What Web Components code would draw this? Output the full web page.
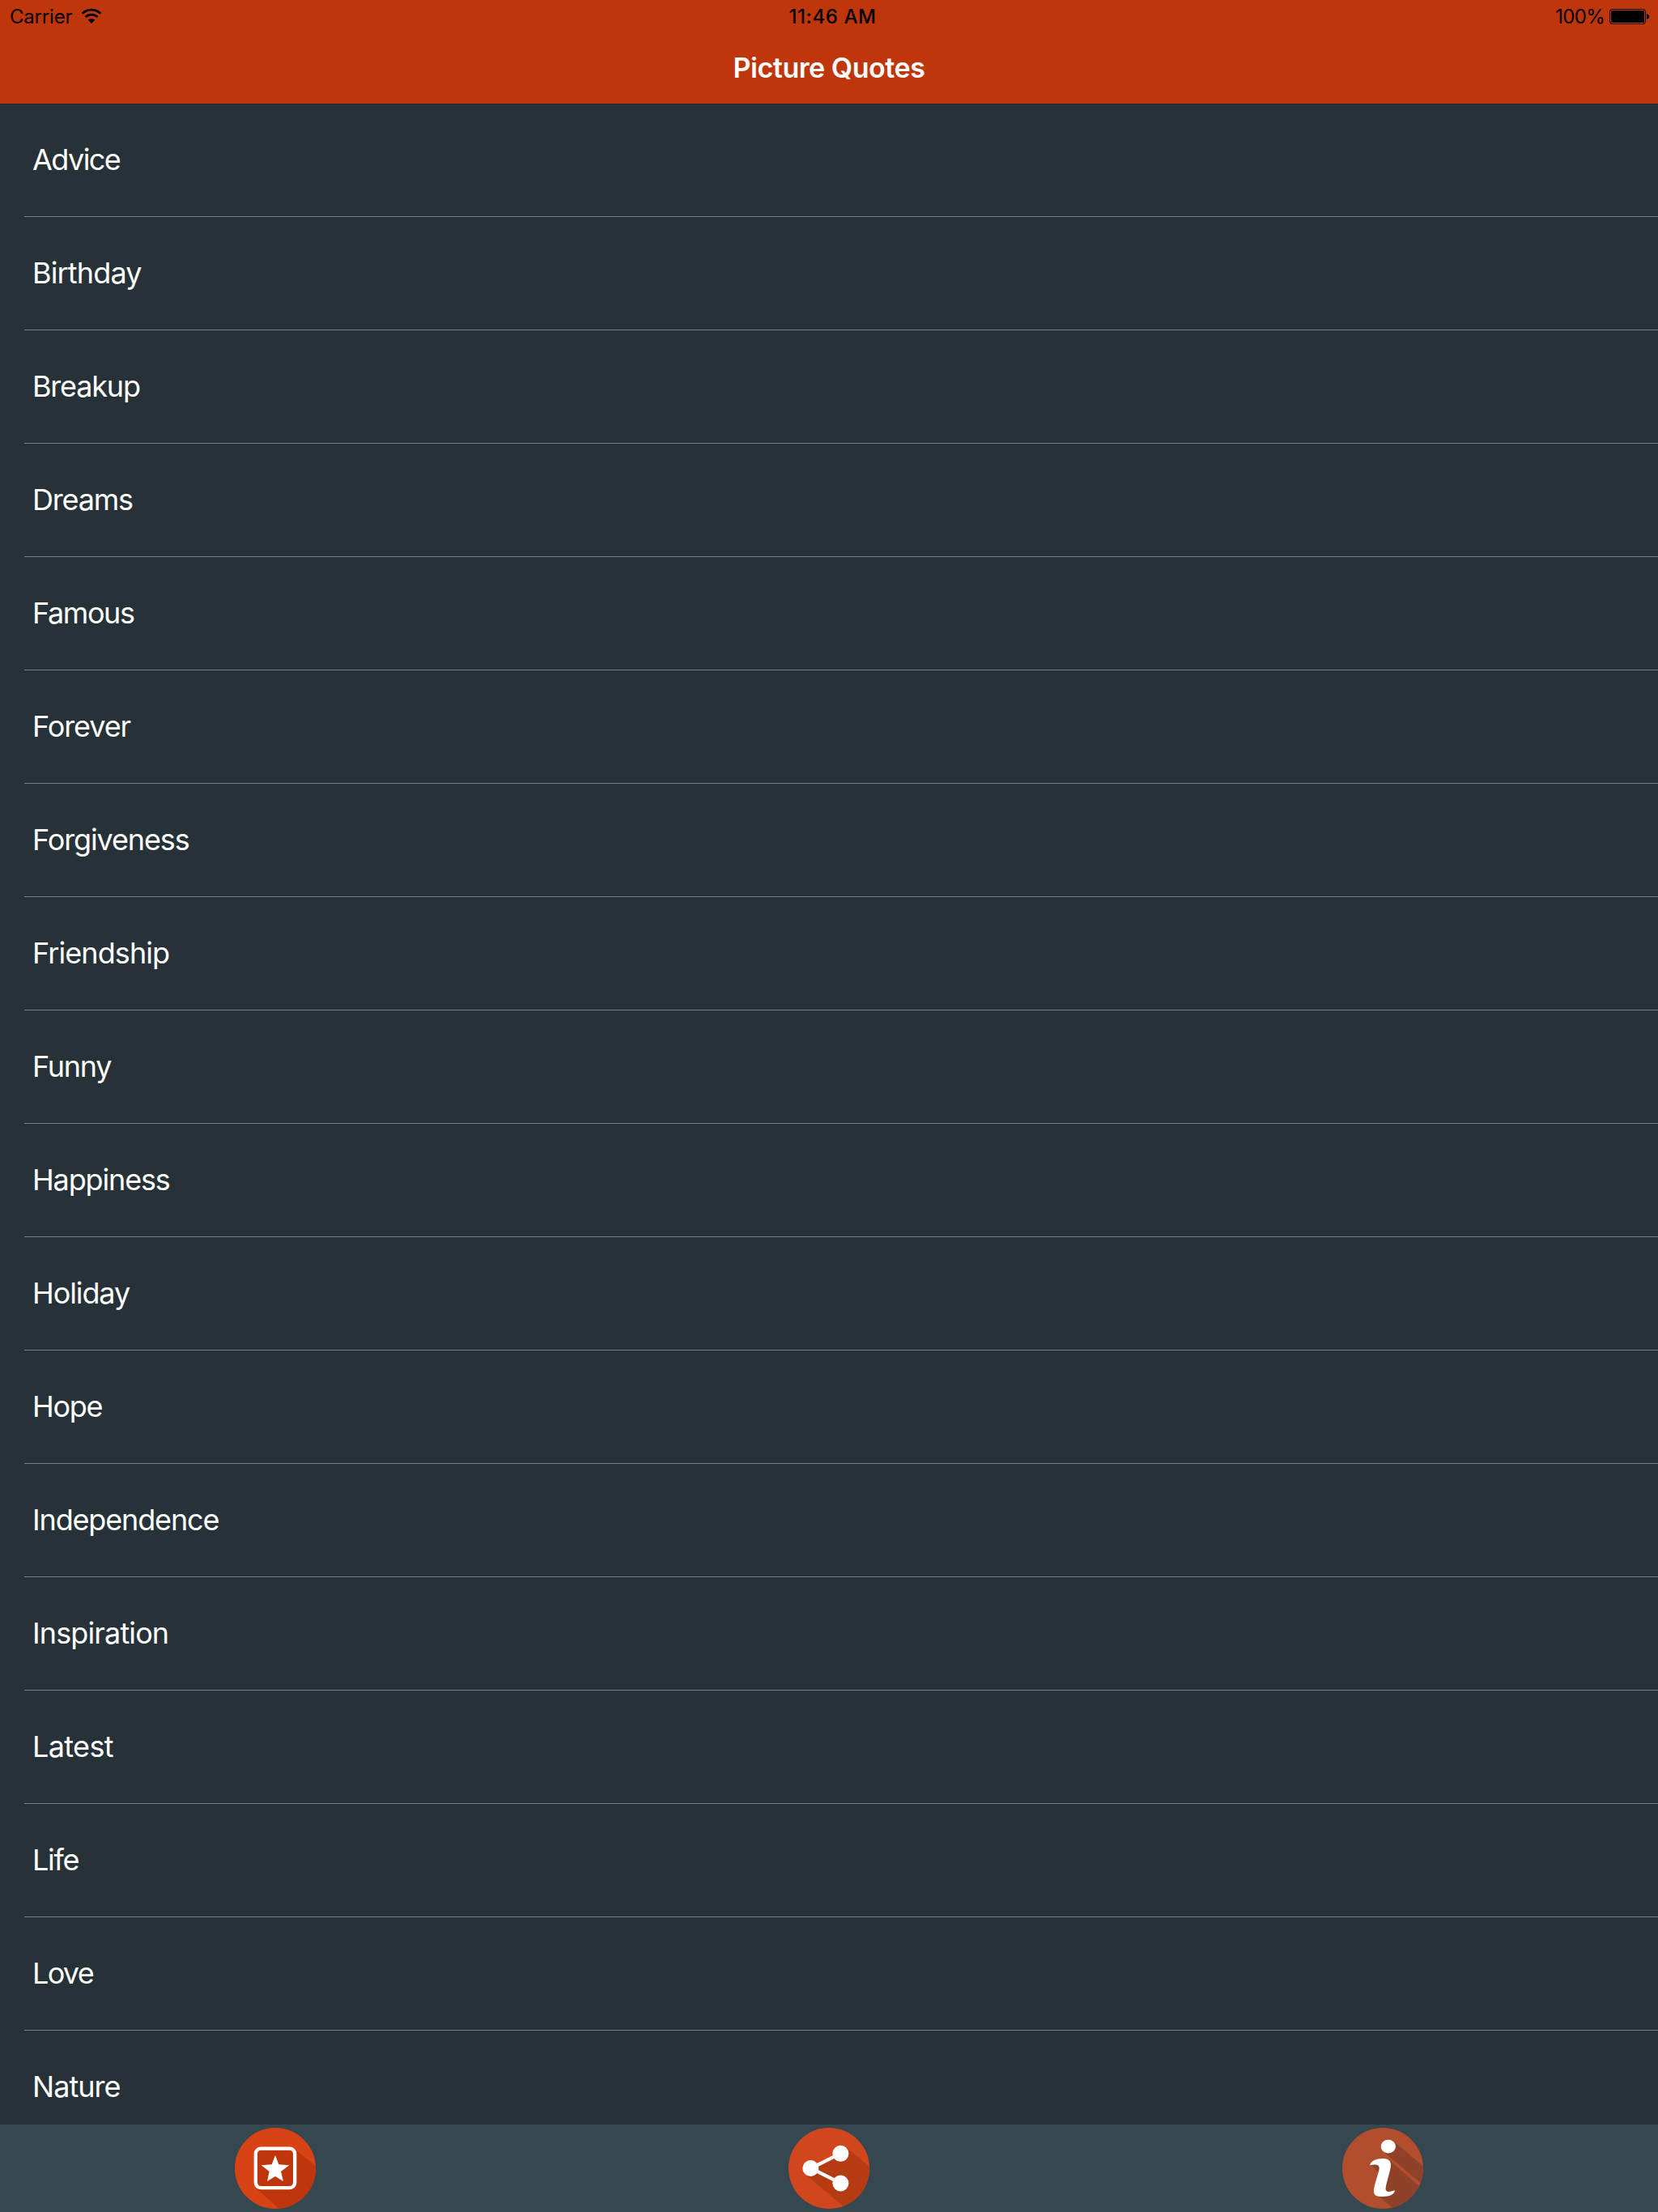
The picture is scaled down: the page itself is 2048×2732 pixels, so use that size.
<!DOCTYPE html>
<html lang="en">
<head>
<meta charset="utf-8">
<title>Picture Quotes</title>
<style>
html, body { margin: 0; height: 100%; background: #263238; }
body { overflow: hidden; font-family: Inter, "Liberation Sans", sans-serif; }
</style>
</head>
<body>
<quotes-app></quotes-app>
<script>
const define = (name, html) => customElements.define(name, class extends HTMLElement {
  constructor() {
    super();
    this.attachShadow({ mode: 'open' }).innerHTML = html;
  }
});

define('status-bar', `
<style>
:host { display: grid; grid-template-columns: 1fr auto 1fr; height: 40px; padding: 0 11px 0 12px; box-sizing: border-box; color: #000; font-size: 24px; line-height: 42px; }
div { display: flex; align-items: flex-start; }
svg { display: block; flex: none; }
.carrier { letter-spacing: -.2px; }
.wifi { margin: 10px 0 0 11px; }
.time { font-weight: 500; letter-spacing: .6px; padding-left: 8px; }
.power { justify-content: flex-end; letter-spacing: -.7px; }
.battery { margin: 11px 0 0 6px; }
</style>
<div class="carrier"><span>Carrier</span>
<svg class="wifi" width="26" height="20" viewBox="0 0 26 20"><path d="M1.700 6.700A16 16 0 0 1 24.300 6.700M5.400 11.100A11 11 0 0 1 20.600 11.100" fill="none" stroke="#000" stroke-width="2.700"/><path d="M13 19 8.600 14.600A6.500 6.500 0 0 1 17.400 14.600Z"/></svg></div>
<div class="time">11:46 AM</div>
<div class="power"><span>100%</span>
<svg class="battery" width="49" height="19" viewBox="0 0 49 19"><rect x=".5" y=".5" width="44" height="18" rx="3" fill="none" stroke="#000"/><rect x="2" y="2" width="41" height="15" rx="1.800"/><path d="M46 6.200Q49 6.800 49 9.500T46 12.800Z"/></svg></div>`);

define('nav-bar', `
<style>
:host { display: flex; flex-direction: column; height: 128px; flex: none; background: #bf360c; border-bottom: 1px solid #20292e; box-sizing: content-box; }
h1 { margin: 0; height: 88px; text-align: center; font-size: 34px; line-height: 88px; font-weight: 600; color: #fff; letter-spacing: -.45px; }
</style>
<status-bar></status-bar>
<h1><slot></slot></h1>`);

define('category-row', `
<style>
:host { display: flex; height: 140px; flex: none; padding-left: 30px; box-sizing: border-box; }
div { flex: 1; box-sizing: border-box; border-bottom: 1px solid #7b7f83; padding-left: 10px; font-size: 36px; line-height: var(--line, 138px); color: #fff; letter-spacing: var(--tracking, -1.2px); }
</style>
<div><slot></slot></div>`);

define('tab-bar', `
<style>
:host { display: flex; flex: none; height: 108px; box-sizing: border-box; padding: 4px 290px; justify-content: space-between; align-items: flex-start; background: #37474f; }
svg { display: block; width: 100px; height: 100px; }
</style>
<svg viewBox="60 54 300 300"><clipPath id="c"><circle cx="210" cy="204" r="150"/></clipPath>
<g clip-path="url(#c)"><rect x="60" y="54" width="300" height="300" fill="#d84315"/><path d="M283 134 380 211V370H242L137 276Z" fill="#bf360c"/></g>
<rect x="137.500" y="131" width="145" height="145.500" rx="19" fill="#bf360c" stroke="#fff" stroke-width="13"/>
<path d="M210 156 223 190 262 193 231 216 240 252 210 234 180 252 188 216 158 193 197 190Z" fill="#fff"/></svg>
<svg viewBox="60 54 300 300"><clipPath id="c"><circle cx="210" cy="204" r="150"/></clipPath>
<g clip-path="url(#c)"><rect x="60" y="54" width="300" height="300" fill="#d2461e"/><path d="M273 127 380 213V370H292L124 227 143 204Z" fill="#b53c12"/></g>
<path d="M253 149 143 204 253 259" fill="none" stroke="#fff" stroke-width="13"/>
<g fill="#fff"><circle cx="142" cy="204" r="30"/><circle cx="253" cy="149.500" r="30"/><circle cx="253" cy="259.500" r="30"/></g></svg>
<svg viewBox="60 54 300 300"><clipPath id="c"><circle cx="210" cy="204" r="150"/></clipPath>
<g clip-path="url(#c)"><rect x="60" y="54" width="300" height="300" fill="#b04e2d"/>
<path d="M248 103 380 212V284L211 141ZM236 175 380 302V370H271L187 301 202 224 164 191Z" fill="#8f412a"/></g>
<g fill="#fff"><ellipse cx="230.500" cy="123.500" rx="27.500" ry="25"/>
<path d="M163 190C169 177 185 168 208 168C230 168 240 176 240 192C240 211 220 266 221 282C222 295 240 291 255 286C253 302 235 309 209 309C187 309 177 304 177 290C176 267 198 218 197 202C196 188 178 189 163 193Z"/></g></svg>`);

const categories = {
  Advice: -1.55, Birthday: -.85, Breakup: -1.2, Dreams: -1.2, Famous: -1.4, Forever: -1.1,
  Forgiveness: -1.12, Friendship: -.92, Funny: -1.3, Happiness: -1.15, Holiday: -1.1, Hope: -1.3,
  Independence: -1.15, Inspiration: -.87, Latest: -.65, Life: -1.3, Love: -1.7, Nature: -.95
};

define('quotes-app', `
<style>
:host { display: flex; flex-direction: column; height: 2732px; width: 2048px; background: #263238; overflow: hidden; }
main { flex: 1; min-height: 0; display: flex; flex-direction: column; overflow: hidden; }
category-row:first-child { height: 139px; --line: 136px; }
</style>
<nav-bar>Picture Quotes</nav-bar>
<main>${Object.entries(categories).map(([name, tracking]) => `<category-row style="--tracking:${tracking}px">${name}</category-row>`).join('')}</main>
<tab-bar></tab-bar>`);
</script>
</body>
</html>
